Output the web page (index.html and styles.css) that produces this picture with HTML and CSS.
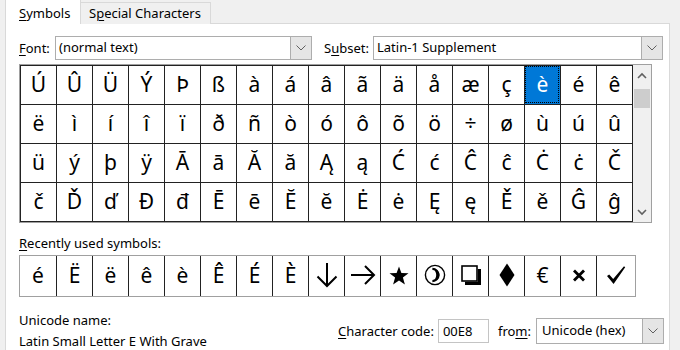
FILE: index.html
```html
<!DOCTYPE html>
<html lang="en">
<head>
	<meta charset="UTF-8">
	<title>Symbol</title>
	<link rel="stylesheet" href="styles.css">
</head>
<body>
	<div class="tabs">
		<div class="tab tab-active"><u>S</u>ymbols</div>
		<div class="tab">S<u>p</u>ecial Characters</div>
	</div>
	<div class="panel">
		<div class="font-row">
			<span class="lbl lbl-font"><u>F</u>ont:</span>
			<div class="combo combo-font">
				<span class="combo-text">(normal text)</span>
				<span class="combo-btn"><svg width="12" height="8" viewBox="0 0 12 8"><polyline points="1.5,1.5 6,6 10.5,1.5" fill="none" stroke="#606060" stroke-width="1"/></svg></span>
			</div>
			<span class="lbl lbl-subset">S<u>u</u>bset:</span>
			<div class="combo combo-subset">
				<span class="combo-text">Latin-1 Supplement</span>
				<span class="combo-btn"><svg width="12" height="8" viewBox="0 0 12 8"><polyline points="1.5,1.5 6,6 10.5,1.5" fill="none" stroke="#606060" stroke-width="1"/></svg></span>
			</div>
		</div>

		<div class="chars">
			<div class="grid">
				<span class="cell">Ú</span><span class="cell">Û</span><span class="cell">Ü</span><span class="cell">Ý</span><span class="cell">Þ</span><span class="cell">ß</span><span class="cell">à</span><span class="cell">á</span><span class="cell">â</span><span class="cell">ã</span><span class="cell">ä</span><span class="cell">å</span><span class="cell">æ</span><span class="cell">ç</span><span class="cell sel">è</span><span class="cell">é</span><span class="cell">ê</span>
				<span class="cell">ë</span><span class="cell">ì</span><span class="cell">í</span><span class="cell">î</span><span class="cell">ï</span><span class="cell">ð</span><span class="cell">ñ</span><span class="cell">ò</span><span class="cell">ó</span><span class="cell">ô</span><span class="cell">õ</span><span class="cell">ö</span><span class="cell">÷</span><span class="cell">ø</span><span class="cell">ù</span><span class="cell">ú</span><span class="cell">û</span>
				<span class="cell">ü</span><span class="cell">ý</span><span class="cell">þ</span><span class="cell">ÿ</span><span class="cell">Ā</span><span class="cell">ā</span><span class="cell">Ă</span><span class="cell">ă</span><span class="cell">Ą</span><span class="cell">ą</span><span class="cell">Ć</span><span class="cell">ć</span><span class="cell">Ĉ</span><span class="cell">ĉ</span><span class="cell">Ċ</span><span class="cell">ċ</span><span class="cell">Č</span>
				<span class="cell">č</span><span class="cell">Ď</span><span class="cell">ď</span><span class="cell">Đ</span><span class="cell">đ</span><span class="cell">Ē</span><span class="cell">ē</span><span class="cell">Ĕ</span><span class="cell">ĕ</span><span class="cell">Ė</span><span class="cell">ė</span><span class="cell">Ę</span><span class="cell">ę</span><span class="cell">Ě</span><span class="cell">ě</span><span class="cell">Ĝ</span><span class="cell">ĝ</span>
			</div>
			<div class="scroll">
				<span class="sb-btn"><svg width="10" height="7" viewBox="0 0 10 7"><polyline points="1,6 5,2 9,6" fill="none" stroke="#606060" stroke-width="1.6"/></svg></span>
				<span class="thumb"></span>
				<span class="sb-space"></span>
				<span class="sb-btn"><svg width="10" height="7" viewBox="0 0 10 7"><polyline points="1,1 5,5 9,1" fill="none" stroke="#606060" stroke-width="1.6"/></svg></span>
			</div>
		</div>

		<div class="recent-label"><u>R</u>ecently used symbols:</div>
		<div class="recent">
			<span class="rcell">é</span><span class="rcell">Ë</span><span class="rcell">ë</span><span class="rcell">ê</span><span class="rcell">è</span><span class="rcell">Ê</span><span class="rcell">É</span><span class="rcell">È</span>
			<span class="rcell"><svg width="24" height="26" viewBox="0 0 24 26"><line x1="12" y1="1" x2="12" y2="24" stroke="#000" stroke-width="2"/><polyline points="2.5,14.5 12,24 21.5,14.5" fill="none" stroke="#000" stroke-width="2"/></svg></span>
			<span class="rcell"><svg width="26" height="22" viewBox="0 0 26 22"><line x1="1" y1="11" x2="24" y2="11" stroke="#000" stroke-width="2"/><polyline points="15,2 24,11 15,20" fill="none" stroke="#000" stroke-width="2"/></svg></span>
			<span class="rcell"><svg width="20" height="19" viewBox="0 0 20 19"><polygon points="10,0.5 12.4,7 19.5,7.2 13.9,11.6 15.9,18.5 10,14.4 4.1,18.5 6.1,11.6 0.5,7.2 7.6,7" fill="#000"/></svg></span>
			<span class="rcell"><svg width="22" height="22" viewBox="0 0 22 22"><circle cx="11" cy="11" r="9.6" fill="none" stroke="#000" stroke-width="1.4"/><path d="M9 4.6 A6.4 6.4 0 0 1 9 17.4 A8 8 0 0 0 9 4.6 Z" fill="#000"/><path d="M8.4 4.9 A6.1 6.1 0 0 1 8.4 17.1" fill="none" stroke="#000" stroke-width="2.2"/></svg></span>
			<span class="rcell"><svg width="22" height="22" viewBox="0 0 22 22"><rect x="2" y="2" width="15" height="15" fill="none" stroke="#000" stroke-width="1.6"/><path d="M17.8 5 H21 V21 H5 V17.8 H17.8 Z" fill="#000"/></svg></span>
			<span class="rcell"><svg width="16" height="24" viewBox="0 0 16 24"><polygon points="8,0.5 15.5,12 8,23.5 0.5,12" fill="#000"/></svg></span>
			<span class="rcell euro">€</span>
			<span class="rcell"><svg width="14" height="13" viewBox="0 0 14 13"><line x1="2" y1="1.5" x2="12" y2="11.5" stroke="#000" stroke-width="2.8"/><line x1="12" y1="1.5" x2="2" y2="11.5" stroke="#000" stroke-width="2.8"/></svg></span>
			<span class="rcell rlast"><svg width="20" height="20" viewBox="0 0 20 20"><path d="M1 11 L3.2 9.4 L7.2 14 L18 1.2 L19.2 2.2 L7.6 19 Z" fill="#000"/></svg></span>
		</div>

		<div class="info">
			<div class="name">
				<div>Unicode name:</div>
				<div>Latin Small Letter E With Grave</div>
			</div>
			<div class="code">
				<span class="lbl"><u>C</u>haracter code:</span>
				<span class="code-input">00E8</span>
				<span class="lbl lbl-from">fro<u>m</u>:</span>
				<div class="combo combo-from">
					<span class="combo-text">Unicode (hex)</span>
					<span class="combo-btn"><svg width="12" height="8" viewBox="0 0 12 8"><polyline points="1.5,1.5 6,6 10.5,1.5" fill="none" stroke="#606060" stroke-width="1"/></svg></span>
				</div>
			</div>
		</div>
	</div>
</body>
</html>
```

FILE: styles.css
```css
*{
	margin: 0;
	padding: 0;
	box-sizing: border-box;
}
body{
	width: 680px;
	height: 350px;
	overflow: hidden;
	background-color: #f0f0f0;
	font-family: "Noto Sans", "Open Sans", sans-serif;
	font-size: 13px;
	color: #000;
}
u{
	text-decoration-thickness: 1px;
	text-underline-offset: 2px;
}
.tabs{
	display: flex;
	align-items: flex-end;
	height: 24px;
	margin-left: 5px;
	position: relative;
	z-index: 1;
}
.tab{
	height: 22px;
	line-height: 20px;
	padding: 0 6px 0 8px;
	width: 131px;
	margin-left: -1px;
	background-color: #f0f0f0;
	border: 1px solid #d9d9d9;
	border-bottom: none;
	white-space: nowrap;
}
.tab-active{
	height: 24px;
	width: 76px;
	margin-left: 0;
	padding: 3px 0 0 13px;
	background-color: #fff;
	border-top: none;
}
.panel{
	margin: -1px 0 0 5px;
	width: 665px;
	height: 340px;
	background-color: #fff;
	border: 1px solid #d9d9d9;
	padding: 12px 5px 0 13px;
}
.font-row{
	display: flex;
	align-items: center;
	height: 24px;
}
.lbl{
	white-space: nowrap;
}
.lbl-font{
	width: 36px;
}
.lbl-subset{
	width: 49px;
	margin-left: 12px;
}
.combo{
	display: flex;
	height: 24px;
	border: 1px solid #adadad;
	background-color: #fff;
}
.combo-font{
	width: 257px;
}
.combo-subset{
	width: 290px;
}
.combo-text{
	flex: 1;
	padding-left: 3px;
	line-height: 21px;
	white-space: nowrap;
}
.combo-btn{
	width: 21px;
	display: flex;
	align-items: center;
	justify-content: center;
	background-color: #e5e5e5;
	border-left: 1px solid #adadad;
}
.chars{
	display: flex;
	width: 633px;
	margin-top: 4px;
	border: 1px solid #a0a0a0;
}
.grid{
	display: grid;
	grid-template-columns: repeat(17, 36px);
	grid-auto-rows: 39px;
	border-right: 1px solid #222;
	border-bottom: 1px solid #222;
}
.cell{
	display: flex;
	align-items: center;
	justify-content: center;
	border-left: 1px solid #222;
	border-top: 1px solid #222;
	font-size: 21px;
	line-height: 1;
	padding-bottom: 2px;
}
.cell.sel{
	background-color: #0078d7;
	color: #fff;
	outline: 1px dotted #000;
	outline-offset: -2px;
}
.scroll{
	width: 18px;
	display: flex;
	flex-direction: column;
	background-color: #f0f0f0;
}
.sb-btn{
	height: 20px;
	display: flex;
	align-items: center;
	justify-content: center;
}
.thumb{
	height: 19px;
	margin: 4px 1px 0;
	background-color: #cdcdcd;
}
.sb-space{
	flex: 1;
}
.recent-label{
	margin-top: 12px;
	line-height: 16px;
}
.recent{
	display: flex;
	width: 617px;
	height: 42px;
	margin-top: 4px;
	border: 1px solid #a0a0a0;
}
.rcell{
	width: 36px;
	display: flex;
	align-items: center;
	justify-content: center;
	font-size: 21px;
	line-height: 1;
	padding-bottom: 2px;
}
.rcell + .rcell{
	border-left: 1px solid #222;
}
.rcell.rlast{
	flex: 1;
}
.info{
	display: flex;
	justify-content: space-between;
	margin-top: 13px;
}
.name{
	line-height: 21px;
}
.code{
	display: flex;
	align-items: center;
	height: 26px;
	margin-top: 8px;
}
.code-input{
	width: 51px;
	height: 24px;
	margin-left: 4px;
	padding-left: 4px;
	line-height: 22px;
	border: 1px solid #c4c4c4;
}
.lbl-from{
	margin-left: 9px;
}
.combo-from{
	width: 128px;
	height: 26px;
	margin-left: 5px;
}
.combo-from .combo-text{
	padding-left: 5px;
	line-height: 23px;
}
```
